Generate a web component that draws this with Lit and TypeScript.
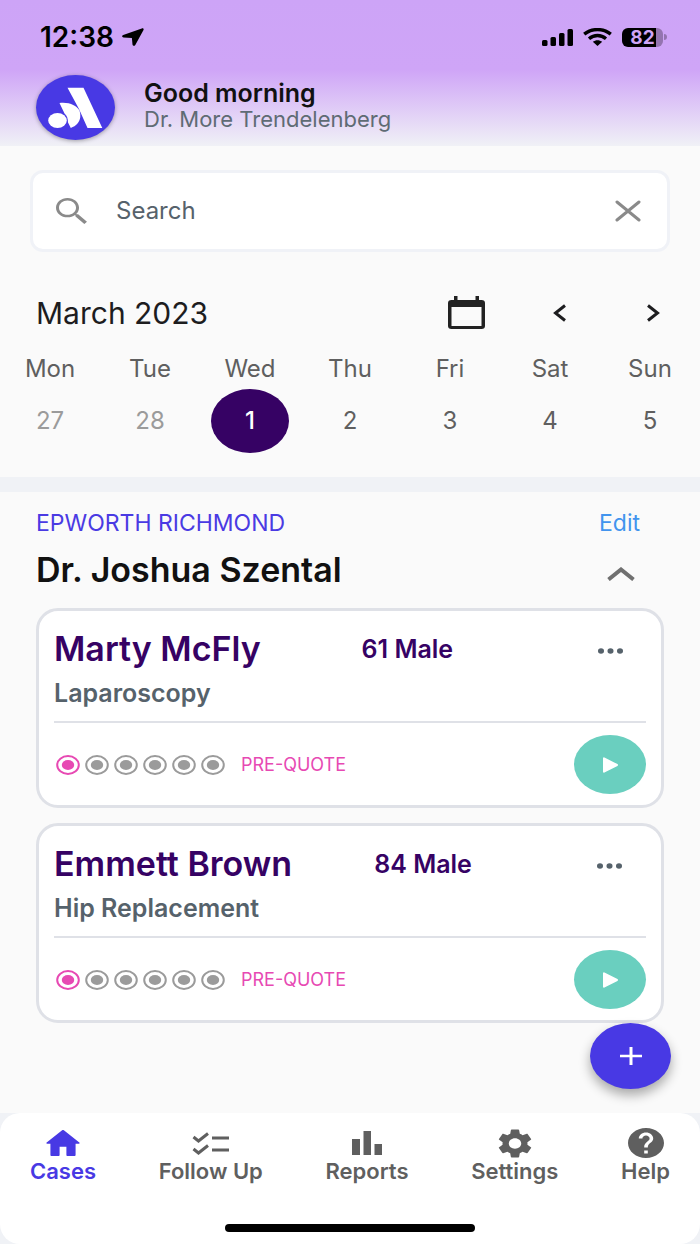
import { LitElement, html, svg, css } from "lit";
import { customElement, property, state } from "lit/decorators.js";
import { classMap } from "lit/directives/class-map.js";

interface Day {
  name: string;
  date: number;
  past?: boolean;
}

interface Case {
  patient: string;
  details: string;
  procedure: string;
  status: string;
  step: number;
}

const DAYS: Day[] = [
  { name: "Mon", date: 27, past: true },
  { name: "Tue", date: 28, past: true },
  { name: "Wed", date: 1 },
  { name: "Thu", date: 2 },
  { name: "Fri", date: 3 },
  { name: "Sat", date: 4 },
  { name: "Sun", date: 5 },
];

const CASES: Case[] = [
  { patient: "Marty McFly", details: "61 Male", procedure: "Laparoscopy", status: "PRE-QUOTE", step: 1 },
  { patient: "Emmett Brown", details: "84 Male", procedure: "Hip Replacement", status: "PRE-QUOTE", step: 1 },
];

const icon = (name: string, width: number, height: number, viewBox: string, body: unknown) => html`
  <svg class=${name} width=${width} height=${height} viewBox=${viewBox} preserveAspectRatio="none" aria-hidden="true">
    ${body}
  </svg>
`;

const NAV = [
  {
    label: "Cases",
    icon: icon("nav-icon", 34, 26, "2 3 20 17", svg`<path fill="currentColor" d="M10 19.3v-5.3h4v5.3c0 .4.3.7.7.7h4c.4 0 .7-.3.7-.7V12h1.9c.5 0 .7-.6.3-.9L12.7 3.3a1 1 0 0 0-1.400 0L2.400 11.100c-.4.3-.2.9.3.9h1.900v7.300c0 .4.3.7.7.7h4c.4 0 .7-.3.7-.7z"/>`),
  },
  {
    label: "Follow Up",
    icon: icon("nav-icon", 37, 23, "0 0 37 23", svg`<path fill="none" stroke="currentColor" stroke-width="3" d="M1.500 5l5 4L16 1.500M1.500 17l5 4L16 13.500M20 6h17M20 18h17"/>`),
  },
  {
    label: "Reports",
    icon: icon("nav-icon", 30, 24, "0 0 30 24", svg`<path fill="currentColor" d="M0 8h8v16H0zM11.500 0h7.500v24h-7.500zM22.500 13H30v11h-7.500z"/>`),
  },
  {
    label: "Settings",
    icon: icon("nav-icon", 34, 29, "2.200 2 19.600 20", svg`<path fill="currentColor" d="M19.140 12.940c.04-.3.06-.61.06-.94 0-.32-.02-.64-.07-.94l2.030-1.580c.18-.14.23-.41.12-.61l-1.920-3.320c-.12-.22-.37-.29-.59-.22l-2.390.96c-.5-.38-1.030-.7-1.620-.94l-.36-2.540c-.04-.24-.24-.41-.48-.41h-3.840c-.24 0-.43.17-.47.41l-.36 2.540c-.59.24-1.130.57-1.620.94l-2.390-.96c-.22-.08-.47 0-.59.22L2.740 8.870c-.12.21-.08.47.12.61l2.030 1.580c-.05.3-.09.63-.09.94s.02.64.07.94l-2.030 1.580c-.18.14-.23.41-.12.61l1.920 3.320c.12.22.37.29.59.22l2.390-.96c.5.38 1.030.7 1.620.94l.36 2.540c.05.24.24.41.48.41h3.840c.24 0 .44-.17.47-.41l.36-2.540c.59-.24 1.130-.56 1.620-.94l2.390.96c.22.08.47 0 .59-.22l1.920-3.320c.12-.22.07-.47-.12-.61l-2.010-1.580zM12 15.600c-1.980 0-3.600-1.620-3.600-3.600s1.620-3.600 3.600-3.600 3.600 1.620 3.600 3.600-1.620 3.600-3.600 3.600z"/>`),
  },
  {
    label: "Help",
    icon: icon("nav-icon", 36, 30, "2 2 20 20", svg`<path fill="currentColor" d="M12 2C6.480 2 2 6.480 2 12s4.480 10 10 10 10-4.480 10-10S17.520 2 12 2zm1 17h-2v-2h2v2zm2.070-7.750l-.9.920C13.450 12.900 13 13.500 13 15h-2v-.5c0-1.100.45-2.100 1.170-2.830l1.240-1.260c.37-.36.59-.86.59-1.410 0-1.100-.9-2-2-2s-2 .9-2 2H8c0-2.210 1.790-4 4-4s4 1.790 4 4c0 .88-.36 1.680-.93 2.250z"/>`),
  },
];

@customElement("status-bar")
class StatusBar extends LitElement {
  static styles = css`
    :host {
      display: flex;
      align-items: center;
      justify-content: space-between;
      height: 74px;
      padding: 0 33px 0 40px;
      font: 600 28px/32px Inter, "Liberation Sans", sans-serif;
      color: #000;
    }
    .group {
      display: flex;
      align-items: center;
      gap: 8px;
    }
    .signals {
      gap: 10px;
    }
    .battery {
      display: flex;
      align-items: center;
    }
    .charge {
      display: grid;
      place-items: center;
      width: 41px;
      height: 19px;
      border-radius: 6px;
      background: linear-gradient(90deg, #000 82%, #9474b0 82%);
      color: #cfa5f7;
      font-size: 19px;
      line-height: 19px;
      font-weight: 700;
    }
    .tip {
      width: 3px;
      height: 6px;
      margin-left: 1px;
      border-radius: 0 3px 3px 0;
      background: #9474b0;
    }
  `;

  render() {
    return html`
      <div class="group">
        <span>12:38</span>
        ${icon("location", 22, 18, "0 0 22 18", svg`<path d="M19.800.4 1.200 7.100c-1.600.6-1.300 2.300.4 2.400l8.300.4.600 6.500c.2 1.600 2 1.900 2.800.5L21.500 2c.6-1.100-.4-2.100-1.700-1.600z"/>`)}
      </div>
      <div class="group signals">
        ${icon("cell", 31, 17, "0 0 31 17", svg`<rect y="11" width="5.500" height="6" rx="1.500"/><rect x="8.500" y="8" width="5.500" height="9" rx="1.500"/><rect x="17" y="4" width="5.500" height="13" rx="1.500"/><rect x="25.500" width="5.500" height="17" rx="1.500"/>`)}
        ${icon("wifi", 29, 18, "0 0 29 18", svg`<g fill="none" stroke="#000" stroke-width="3.400"><path d="M1.200 6.200C9 0 20 0 27.800 6.200"/><path d="M6 10.700c5-4.200 12-4.200 17 0"/></g><path d="M9.800 13.800c2.800-2.200 6.600-2.200 9.400 0L14.500 18z"/>`)}
        <div class="battery">
          <span class="charge">82</span>
          <span class="tip"></span>
        </div>
      </div>
    `;
  }
}

@customElement("case-card")
class CaseCard extends LitElement {
  @property({ attribute: false }) item!: Case;

  static styles = css`
    :host {
      display: block;
      box-sizing: border-box;
      padding: 16px 15px 11px;
      border: 3px solid #dfe1e7;
      border-radius: 22px;
      background: #fff;
      font-family: Inter, "Liberation Sans", sans-serif;
    }
    button {
      padding: 0;
      border: 0;
      background: none;
      cursor: pointer;
    }
    .top {
      display: flex;
      align-items: center;
      justify-content: space-between;
      height: 44px;
    }
    .patient {
      margin: 0;
      font-size: 34px;
      line-height: 44px;
      font-weight: 600;
      color: #360264;
    }
    .details {
      font-size: 25px;
      line-height: 32px;
      font-weight: 600;
      color: #360264;
    }
    .more {
      display: grid;
      place-items: center;
      width: 92px;
      height: 44px;
      padding: 4px 0 0 20px;
      color: #56626b;
    }
    .procedure {
      margin: 5px 0 11px;
      font-size: 25px;
      line-height: 34px;
      font-weight: 600;
      color: #56626b;
    }
    .bottom {
      display: flex;
      align-items: center;
      gap: 16px;
      padding-top: 12px;
      border-top: 2px solid #dfe1e7;
    }
    .steps {
      display: flex;
      gap: 5px;
      padding-left: 2px;
    }
    svg {
      display: block;
    }
    .step {
      color: #9b9b9b;
    }
    .step.done {
      color: #e749b3;
    }
    .status {
      font-size: 18px;
      line-height: 24px;
      color: #e749b3;
    }
    .play {
      display: grid;
      place-items: center;
      width: 72px;
      height: 59px;
      margin-left: auto;
      border-radius: 50%;
      background: #6acfbf;
    }
  `;

  render() {
    const { patient, details, procedure, status, step } = this.item;
    return html`
      <div class="top">
        <h3 class="patient">${patient}</h3>
        <span class="details">${details}</span>
        <button class="more" aria-label="More options for ${patient}">
          ${icon("dots", 25, 6, "0 0 25 6", svg`<g fill="currentColor"><ellipse cx="3" cy="3" rx="3" ry="2.700"/><ellipse cx="12.500" cy="3" rx="3" ry="2.700"/><ellipse cx="22" cy="3" rx="3" ry="2.700"/></g>`)}
        </button>
      </div>
      <p class="procedure">${procedure}</p>
      <div class="bottom">
        <div class="steps" role="img" aria-label="Step ${step} of 6">
          ${[1, 2, 3, 4, 5, 6].map(
            (n) => html`<span class=${classMap({ step: true, done: n <= step })}>
              ${icon("ring", 24, 20, "0 0 24 20", svg`<ellipse cx="12" cy="10" rx="10.800" ry="8.900" fill="none" stroke="currentColor" stroke-width="2"/><ellipse cx="12" cy="10" rx="6.200" ry="5" fill="currentColor"/>`)}
            </span>`,
          )}
        </div>
        <span class="status">${status}</span>
        <button class="play" aria-label="Start ${patient}">
          ${icon("triangle", 16, 16, "-2 0 16 16", svg`<path fill="#fff" stroke="#fff" stroke-width="2" stroke-linejoin="round" d="M0 1.300v13.400L13 8z"/>`)}
        </button>
      </div>
    `;
  }
}

@customElement("app-root")
class AppRoot extends LitElement {
  @state() private selected = 1;
  @state() private open = true;

  static styles = css`
    :host {
      display: flex;
      flex-direction: column;
      min-height: 100vh;
      background: #fafafa;
      font-family: Inter, "Liberation Sans", sans-serif;
      color: #1d1d1f;
    }
    button {
      padding: 0;
      border: 0;
      background: none;
      font: inherit;
      color: inherit;
      cursor: pointer;
    }
    svg {
      display: block;
    }
    .header {
      background: linear-gradient(#cda4f7 0, #cfa5f7 70px, #f0f1f6 100%);
    }
    .greeting {
      display: flex;
      align-items: center;
      gap: 29px;
      padding: 0 36px 5px;
    }
    .avatar {
      filter: drop-shadow(0 1px 2px #0005);
    }
    .hello,
    .doctor {
      margin: 0;
    }
    .hello {
      font-size: 25px;
      line-height: 26px;
      font-weight: 600;
      color: #111;
    }
    .doctor {
      padding-bottom: 4px;
      font-size: 22px;
      line-height: 26px;
      color: #5f6b74;
    }
    .search {
      display: flex;
      align-items: center;
      gap: 29px;
      height: 76px;
      margin: 24px 30px 0;
      padding: 0 26px 0 23px;
      border: 3px solid #f0f2f7;
      border-radius: 13px;
      background: #fff;
      color: #8a8a8a;
    }
    .field {
      flex: 1;
      min-width: 0;
      padding: 0;
      border: 0;
      outline: 0;
      background: none;
      font: 400 24px/32px Inter, "Liberation Sans", sans-serif;
      color: #56626b;
    }
    .field::placeholder {
      color: #56626b;
      opacity: 1;
    }
    .month {
      display: flex;
      align-items: center;
      height: 40px;
      margin-top: 41px;
      padding: 0 27px 0 36px;
    }
    .month-name {
      flex: 1;
      margin: 0;
      font-size: 30px;
      line-height: 40px;
      font-weight: 400;
    }
    .month-tools {
      display: flex;
      align-items: center;
      gap: 54px;
    }
    .arrow {
      display: grid;
      place-items: center;
      width: 40px;
      height: 40px;
    }
    .week {
      display: grid;
      grid-template-columns: repeat(7, 1fr);
      padding: 20px 0 24px;
    }
    .day {
      display: flex;
      flex-direction: column;
      align-items: center;
      gap: 4px;
      font-size: 24px;
      line-height: 32px;
      color: #5f5f5f;
    }
    .date {
      display: grid;
      place-items: center;
      width: 78px;
      height: 64px;
      border-radius: 50%;
    }
    .past {
      color: #9b9b9b;
    }
    .selected {
      background: #360264;
      color: #fff;
      font-weight: 500;
    }
    .list {
      padding: 15px 36px 24px;
      border-top: 15px solid #f0f2f6;
    }
    .row {
      display: flex;
      align-items: center;
      justify-content: space-between;
    }
    .hospital {
      margin: 0;
      font-size: 23px;
      line-height: 32px;
      font-weight: 400;
      color: #4a3ae3;
    }
    .edit {
      margin-right: 24px;
      font-size: 23px;
      line-height: 32px;
      color: #4294ee;
      text-decoration: none;
    }
    .surgeon {
      margin: 9px 0 16px;
      font-size: 34px;
      line-height: 44px;
      font-weight: 600;
      color: #111;
    }
    .toggle {
      margin-right: 29px;
      color: #707070;
    }
    .closed {
      transform: rotate(180deg);
    }
    .cards {
      display: flex;
      flex-direction: column;
      gap: 15px;
    }
    .footer {
      position: sticky;
      bottom: 0;
      margin-top: auto;
      background: #f0f2f6;
    }
    .fab {
      position: absolute;
      right: 29px;
      bottom: calc(100% + 24px);
      display: grid;
      place-items: center;
      width: 81px;
      height: 66px;
      border-radius: 50%;
      background: #4839e4;
      box-shadow: 0 6px 12px #0005;
    }
    .panel {
      display: flex;
      flex-direction: column;
      align-items: center;
      gap: 41px;
      padding: 14px 0 12px;
      border-radius: 20px;
      background: #fff;
    }
    .nav {
      display: flex;
      align-self: stretch;
      justify-content: space-between;
      padding: 0 30px;
    }
    .tab {
      display: flex;
      flex-direction: column;
      align-items: center;
      font-size: 22px;
      line-height: 24px;
      font-weight: 600;
      color: #5f5f5f;
      text-decoration: none;
    }
    .tab-icon {
      display: grid;
      place-items: center;
      height: 32px;
    }
    .active {
      color: #4839e4;
    }
    .home-bar {
      width: 250px;
      height: 8px;
      border-radius: 4px;
      background: #000;
    }
  `;

  render() {
    return html`
      <header class="header">
        <status-bar></status-bar>
        <div class="greeting">
          ${icon("avatar", 79, 67, "0 0 79 67", svg`<ellipse cx="39.500" cy="33.500" rx="39.500" ry="32.500" fill="#4839e4"/><g fill="#fff"><path d="M31.500 13.700h16L66.300 53.900H51.500L43 35z"/><ellipse cx="21.500" cy="46.500" rx="9.300" ry="7.600"/><path d="M23.500 29C34 28 40 31.500 43.500 36.500q1 3 .8 6.500c-.8 5.500-4 9-9.500 10.900L32 48.500c0-4-1-7-3.500-9z"/></g>`)}
          <div>
            <h1 class="hello">Good morning</h1>
            <p class="doctor">Dr. More Trendelenberg</p>
          </div>
        </div>
      </header>

      <main>
        <div class="search" role="search">
          ${icon("magnifier", 31, 26, "3 3 17.500 17.500", svg`<path fill="currentColor" d="M15.500 14h-.79l-.28-.27C15.410 12.590 16 11.110 16 9.500 16 5.910 13.090 3 9.500 3S3 5.910 3 9.500 5.910 16 9.500 16c1.610 0 3.090-.59 4.230-1.570l.27.28v.79l5 4.990L20.490 19l-4.990-5zm-6 .3C6.850 14.300 4.700 12.150 4.700 9.500S6.850 4.700 9.500 4.700s4.800 2.150 4.800 4.800-2.150 4.800-4.800 4.800z"/>`)}
          <input class="field" type="text" aria-label="Search" placeholder="Search" />
          <button aria-label="Clear search">
            ${icon("cross", 26, 22, "0 0 26 22", svg`<path fill="none" stroke="currentColor" stroke-width="3" stroke-linecap="round" d="M2 2l22 18M24 2 2 20"/>`)}
          </button>
        </div>

        <div class="month">
          <h2 class="month-name">March 2023</h2>
          <div class="month-tools">
            <button aria-label="Open calendar">
              ${icon("calendar", 37, 34, "0 0 37 34", svg`<path fill="#222" fill-rule="evenodd" d="M6 0h3.500v4h18V0H31v4h2.500Q37 4 37 7v23q0 3-3.500 3h-30Q0 33 0 30V7q0-3 3.500-3H6zM3.500 11v19h30V11z"/>`)}
            </button>
            <button class="arrow" aria-label="Previous week">
              ${icon("prev", 13, 18, "0 0 13 18", svg`<path fill="none" stroke="#1d1d1f" stroke-width="3" d="M12 1.500 2.500 9l9.500 7.500"/>`)}
            </button>
            <button class="arrow" aria-label="Next week">
              ${icon("next", 13, 18, "0 0 13 18", svg`<path fill="none" stroke="#1d1d1f" stroke-width="3" d="M1 1.500 10.500 9 1 16.500"/>`)}
            </button>
          </div>
        </div>

        <div class="week">
          ${DAYS.map(
            (day) => html`<div class="day">
              <span>${day.name}</span>
              <button
                class=${classMap({ date: true, past: !!day.past, selected: day.date === this.selected })}
                @click=${() => (this.selected = day.date)}
              >
                ${day.date}
              </button>
            </div>`,
          )}
        </div>

        <section class="list">
          <div class="row">
            <p class="hospital">EPWORTH RICHMOND</p>
            <a class="edit" href="#edit">Edit</a>
          </div>
          <div class="row">
            <h2 class="surgeon">Dr. Joshua Szental</h2>
            <button
              class=${classMap({ toggle: true, closed: !this.open })}
              aria-label="Toggle cases"
              aria-expanded=${this.open ? "true" : "false"}
              @click=${() => (this.open = !this.open)}
            >
              ${icon("chevron", 28, 14, "0 0 28 14", svg`<path fill="none" stroke="currentColor" stroke-width="4" d="M1.500 12.500 14 2.500l12.500 10"/>`)}
            </button>
          </div>
          <div class="cards">
            ${this.open ? CASES.map((item) => html`<case-card .item=${item}></case-card>`) : null}
          </div>
        </section>
      </main>

      <footer class="footer">
        <button class="fab" aria-label="Add case">
          ${icon("plus", 22, 18, "0 0 22 18", svg`<path fill="#fff" d="M9.500 0h3v7.700H22v2.600h-9.500V18h-3v-7.700H0V7.700h9.500z"/>`)}
        </button>
        <div class="panel">
          <nav class="nav">
            ${NAV.map(
              (tab, i) => html`<a class=${classMap({ tab: true, active: i === 0 })} href="#${tab.label}">
                <span class="tab-icon">${tab.icon}</span>
                <span>${tab.label}</span>
              </a>`,
            )}
          </nav>
          <div class="home-bar"></div>
        </div>
      </footer>
    `;
  }
}
